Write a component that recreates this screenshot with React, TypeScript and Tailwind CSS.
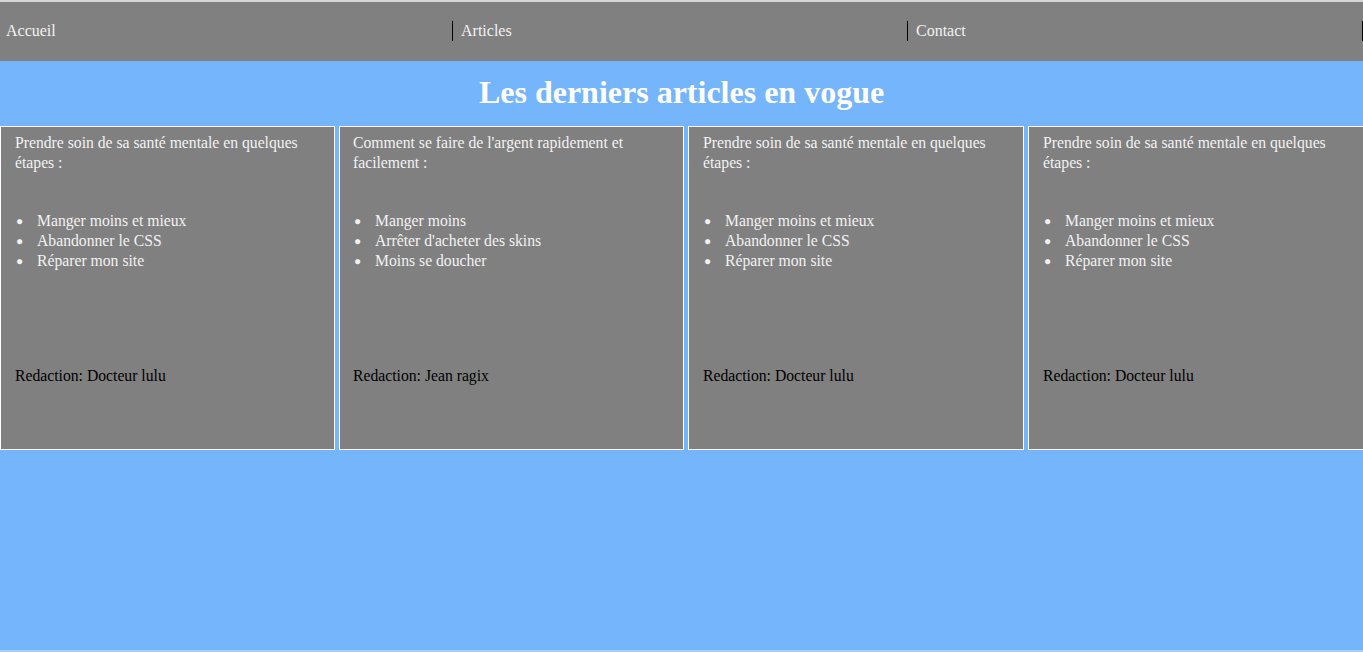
const cards = [
  { w: "w-[335px] pl-[14px]", title: ["Prendre soin de sa santé mentale en quelques", "étapes :"], items: ["Manger moins et mieux", "Abandonner le CSS", "Réparer mon site"], author: "Docteur lulu" },
  { w: "w-[345px] pl-[13px]", title: ["Comment se faire de l'argent rapidement et", "facilement :"], items: ["Manger moins", "Arrêter d'acheter des skins", "Moins se doucher"], author: "Jean ragix" },
  { w: "w-[336px] pl-[14px]", title: ["Prendre soin de sa santé mentale en quelques", "étapes :"], items: ["Manger moins et mieux", "Abandonner le CSS", "Réparer mon site"], author: "Docteur lulu" },
  { w: "w-[336px] pl-[14px]", title: ["Prendre soin de sa santé mentale en quelques", "étapes :"], items: ["Manger moins et mieux", "Abandonner le CSS", "Réparer mon site"], author: "Docteur lulu" },
];

export default function App() {
  return (
    <div className="w-[1363px] h-[652px] overflow-hidden flex flex-col bg-[#75b5fc] font-['Liberation_Serif',serif] text-[16px]">
      <div className="h-[2px] bg-[#d6d6d6]" />
      <nav className="h-[59px] bg-[#808080] flex items-center pb-[2px]">
        {["Accueil", "Articles", "Contact"].map((t) => (
          <div key={t} className="w-[455px] shrink-0 flex">
            <div className="w-[453px] pl-[6px] h-[20px] leading-[20px] text-[#f2f2f2] border-r border-black">{t}</div>
          </div>
        ))}
      </nav>
      <h1 className="text-center text-white font-bold text-[32px] leading-[37px] mt-[13px] mb-[15px]">
        Les derniers articles en vogue
      </h1>
      <div className="flex gap-[4px]">
        {cards.map((c, i) => (
          <div key={i} className={`${c.w} h-[324px] shrink-0 bg-[#808080] border border-white pr-[10px] pt-[6px] leading-[20px] text-[15.7px]`}>
            <div className="text-[#f2f2f2]">
              {c.title.map((l, j) => (
                <div key={j} className="whitespace-nowrap">{l}</div>
              ))}
            </div>
            <ul className="mt-[38px] text-[#f2f2f2]">
              {c.items.map((it) => (
                <li key={it} className="flex items-center">
                  <span className="w-[22px] shrink-0 pl-[1px] text-[12px]">●</span>
                  <span>{it}</span>
                </li>
              ))}
            </ul>
            <div className="mt-[95px] text-black">Redaction: {c.author}</div>
          </div>
        ))}
      </div>
      <div className="flex-1" />
      <div className="h-[2px] bg-[#a9cff6]" />
    </div>
  );
}
